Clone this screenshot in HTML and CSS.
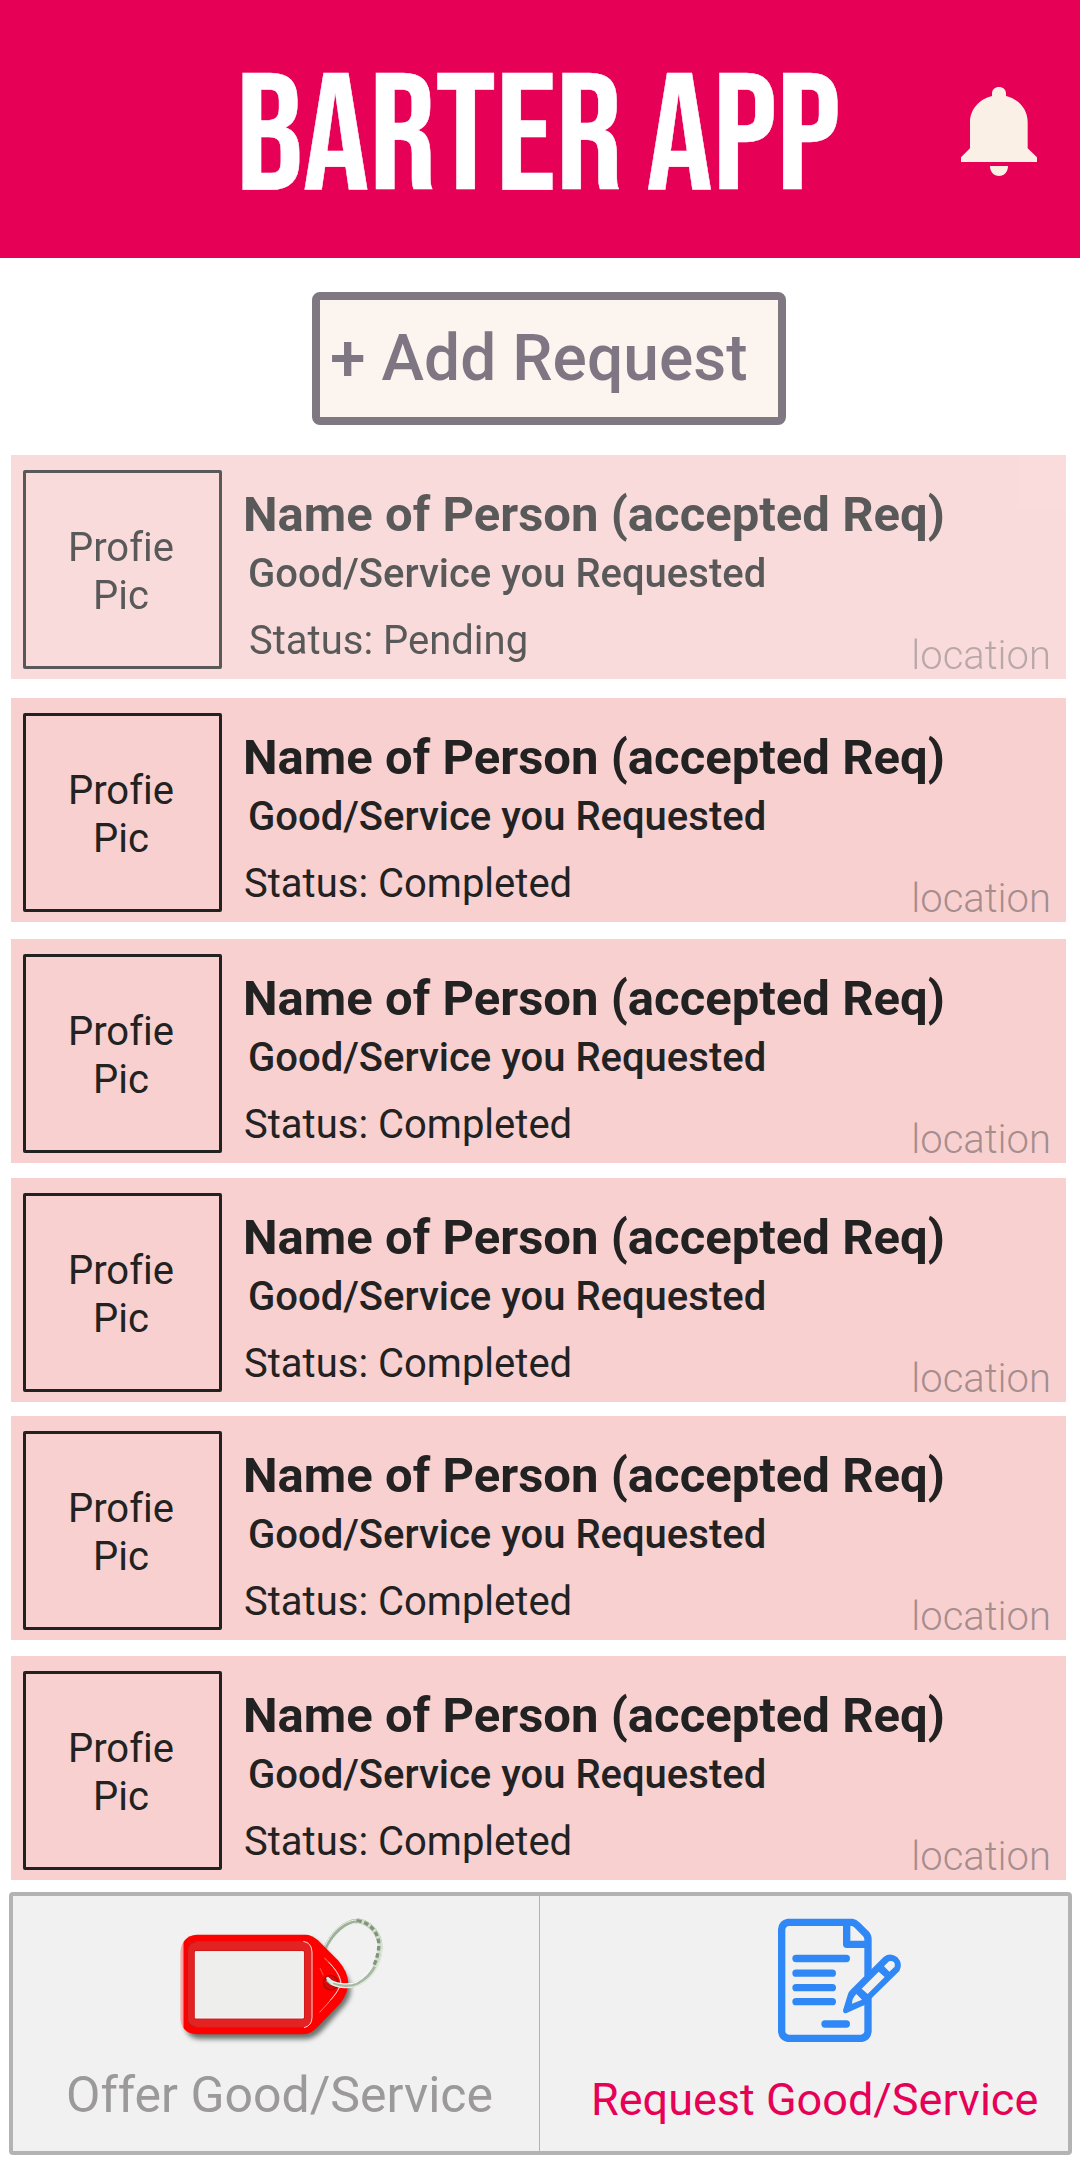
FILE: index.html
```html
<!DOCTYPE html>
<html lang="en">
<head>
<meta charset="utf-8">
<title>Barter App</title>
<link rel="stylesheet" href="styles.css">
</head>
<body>
<header class="header">
  <h1 class="title">BARTER APP</h1>
  <svg class="bell" viewBox="90 78 234 270" aria-hidden="true">
    <path d="M120 187C120 148 148 117 186 108V101C186 88 195 81 207 81S228 88 228 101V108C266 117 293 148 293 187V265L321 292V306H93V292L120 265Z"/>
    <path d="M180 318H234C234 336 222 348 207 348S180 336 180 318Z"/>
  </svg>
</header>

<button class="add" type="button">+ Add Request</button>

<main class="list">
  <article class="card card-pending">
    <div class="pic">Profie<br>Pic</div>
    <div class="info">
      <h2 class="name">Name of Person (accepted Req)</h2>
      <p class="service">Good/Service you Requested</p>
      <p class="status">Status: Pending</p>
    </div>
    <span class="location">location</span>
  </article>
  <article class="card gap-19">
    <div class="pic">Profie<br>Pic</div>
    <div class="info">
      <h2 class="name">Name of Person (accepted Req)</h2>
      <p class="service">Good/Service you Requested</p>
      <p class="status">Status: Completed</p>
    </div>
    <span class="location">location</span>
  </article>
  <article class="card gap-17">
    <div class="pic">Profie<br>Pic</div>
    <div class="info">
      <h2 class="name">Name of Person (accepted Req)</h2>
      <p class="service">Good/Service you Requested</p>
      <p class="status">Status: Completed</p>
    </div>
    <span class="location">location</span>
  </article>
  <article class="card gap-15">
    <div class="pic">Profie<br>Pic</div>
    <div class="info">
      <h2 class="name">Name of Person (accepted Req)</h2>
      <p class="service">Good/Service you Requested</p>
      <p class="status">Status: Completed</p>
    </div>
    <span class="location">location</span>
  </article>
  <article class="card gap-14">
    <div class="pic">Profie<br>Pic</div>
    <div class="info">
      <h2 class="name">Name of Person (accepted Req)</h2>
      <p class="service">Good/Service you Requested</p>
      <p class="status">Status: Completed</p>
    </div>
    <span class="location">location</span>
  </article>
  <article class="card gap-16">
    <div class="pic">Profie<br>Pic</div>
    <div class="info">
      <h2 class="name">Name of Person (accepted Req)</h2>
      <p class="service">Good/Service you Requested</p>
      <p class="status">Status: Completed</p>
    </div>
    <span class="location">location</span>
  </article>
</main>

<nav class="nav">
  <a class="tab tab-offer">
    <svg class="tag-icon" viewBox="54 81 624 396" aria-hidden="true">
      <defs>
        <filter id="soft" x="-10%" y="-10%" width="120%" height="130%"><feGaussianBlur stdDeviation="8"/></filter>
        <linearGradient id="edge" x1="0" x2="1" y1="0" y2="0">
          <stop offset="0" stop-color="#f6b5b5"/><stop offset=".016" stop-color="#f99"/><stop offset=".022" stop-color="#f00"/>
        </linearGradient>
      </defs>
      <path d="M494 180C515 130 553 96 591 93" fill="none" stroke="#9fb09a" stroke-width="13"/>
      <path d="M491 177C512 126 551 92 588 90" fill="none" stroke="#eef3ec" stroke-width="3"/>
      <path d="M499 182C519 136 556 103 588 99" fill="none" stroke="#f3f6f1" stroke-width="2.5"/>
      <path d="M112 146H440Q462 146 482 168L545 238Q596 296 552 348L484 424Q460 447 436 447H118Q76 444 74 396V190Q78 148 112 146Z" fill="#5d6560" opacity=".9" filter="url(#soft)"/>
      <path d="M110 134H436Q456 134 474 151L534 211Q592 277 540 341L470 414Q450 433 430 433H110Q64 430 61 385V185Q66 138 110 134Z" fill="url(#edge)"/>
      <path d="M105 154H430Q457 158 457 184V384Q457 409 430 412H108Q82 408 80 384V184Q82 158 105 154Z" fill="#e32222"/>
      <path d="M107 155Q83 160 82 184V384Q83 407 107 411" fill="none" stroke="#b80d0d" stroke-width="2"/>
      <path d="M430 154Q455 158 456 186V382Q456 407 432 413" fill="none" stroke="#fbd5d5" stroke-width="3"/>
      <path d="M104 183H432V386H104Z" fill="#eeeeec" stroke="#c60c12" stroke-width="3"/>
      <path d="M106 185H430V384H106Z" fill="none" stroke="#fafafa" stroke-width="3"/>
      <path d="M493 204C518 226 537 251 542 276C539 307 507 335 479 367" fill="none" stroke="#ff9b8b" stroke-width="2.5"/>
      <path d="M506 217C527 238 539 255 543 276C541 293 526 314 510 331" fill="none" stroke="#fff" stroke-width="2"/>
      <path d="M480 234L490 256" fill="none" stroke="#ff8060" stroke-width="2"/>
      <circle cx="512" cy="278" r="22" fill="#d90808" stroke="#a60000" stroke-width="3"/>
      <path d="M503 268C523 289 565 292 592 281C644 257 666 199 659 155C650 119 624 96 591 92" fill="none" stroke="#a8b8a3" stroke-width="14"/>
      <path d="M502 266C523 282 565 286 588 277C637 252 657 199 652 158" fill="none" stroke="#f5f8f3" stroke-width="4"/>
      <path d="M512 281C539 296 573 296 596 285C648 260 670 205 664 158" fill="none" stroke="#e5ede1" stroke-width="4"/>
      <path d="M591 92C624 96 650 119 659 155C661 178 655 205 643 230" fill="none" stroke="#d3decf" stroke-width="13"/>
      <path d="M591 92C624 96 650 119 656 155C658 178 652 205 640 230" fill="none" stroke="#809678" stroke-width="10" stroke-dasharray="14 8"/>
      <path d="M503 265L515 279" stroke="#d7eee7" stroke-width="9" stroke-linecap="round"/>
    </svg>
    <span class="offer-label">Offer Good/Service</span>
  </a>
  <a class="tab tab-request">
    <svg class="doc-icon" viewBox="48 51 384 384" fill="none" stroke="#3087f6" stroke-linecap="round" stroke-linejoin="round" aria-hidden="true">
      <g stroke-width="22">
        <path d="M324 290V395Q322 412 305 415H84Q67 412 65 395V88Q67 70 84 67H277Q284 68 291 75L317 101Q324 108 324 118V228" stroke-linecap="butt"/>
        <path d="M260 70V133H320"/>
        <path d="M108 175.500H259M108 219.500H217M108 263H217M108 305H217M195 372H259"/>
      </g>
      <path d="M249 331L264 282Q266 276 271 271L371 171Q391 156 412 172Q430 192 418 213L317 312Q312 317 305 319L260 339Q249 342 249 331Z" fill="#3087f6" stroke="none"/>
      <path d="M356 215L374 231L323 282L305 266ZM387 184L404 200Q407 193 402 187Q396 181 387 184ZM372 199L387 184L404 200L388 215ZM289 282L306 299L276 311Q276 295 289 282Z" fill="#f1f1f1" stroke="none"/>
    </svg>
    <span class="request-label">Request Good/Service</span>
  </a>
</nav>
</body>
</html>
```
FILE: styles.css
```css
* {
  box-sizing: border-box;
  margin: 0;
  padding: 0;
}

body {
  width: 1080px;
  height: 2160px;
  background: #fff;
  color: #222;
  font-family: Roboto, "Liberation Sans", sans-serif;
  font-variant-ligatures: none;
  overflow: hidden;
}

.header {
  display: flex;
  justify-content: space-between;
  height: 258px;
  padding: 0 42px 0 236px;
  background: #e60157;
}

.title {
  padding-top: 40px;
  color: #fff;
  font: 400 165.700px/200px "Bebas Neue", "Roboto Condensed", sans-serif;
  letter-spacing: -.1px;
  word-spacing: -2.500px;
  -webkit-text-stroke: .5px #fff;
  white-space: nowrap;
}

.bell {
  width: 78px;
  height: 90px;
  margin-top: 86px;
  fill: #fbf0e6;
}

.add {
  display: block;
  width: 474px;
  height: 133px;
  margin: 34px 0 30px 312px;
  padding: 0 0 0 10px;
  border: 8px solid #7f7883;
  border-radius: 8px;
  background: #fcf4ee;
  color: #7f7683;
  font: 500 64px/114px Roboto, "Liberation Sans", sans-serif;
  letter-spacing: .06px;
  text-align: left;
  white-space: nowrap;
}

.list {
  width: 1055px;
  margin-left: 11px;
}

.card {
  display: flex;
  align-items: flex-start;
  height: 224px;
  padding: 0 15px 0 12px;
  background: #f8d0d0;
}

.card-pending { opacity: .75; }
.gap-14 { margin-top: 14px; }
.gap-15 { margin-top: 15px; }
.gap-16 { margin-top: 16px; }
.gap-17 { margin-top: 17px; }
.gap-19 { margin-top: 19px; }

.pic {
  flex: none;
  width: 199px;
  height: 199px;
  margin-top: 15px;
  padding: 51px 3px 0 0;
  border: 3px solid #222;
  border-radius: 2px;
  font-size: 40px;
  line-height: 48px;
  text-align: center;
}

.info {
  flex: 1;
  min-width: 0;
  padding: 32px 0 0 21px;
  white-space: nowrap;
}

.name {
  font-size: 49px;
  font-weight: 700;
  line-height: 56px;
  letter-spacing: .02px;
}

.service {
  margin-top: 7px;
  padding-left: 5px;
  font-size: 40px;
  font-weight: 500;
  line-height: 48px;
}

.status {
  margin-top: 19px;
  padding-left: 1px;
  font-size: 40px;
  line-height: 48px;
}

.card-pending .status { padding-left: 6px; }

.location {
  align-self: flex-end;
  margin: 0 0 -1px -40px;
  color: rgba(34, 34, 34, .4);
  font-size: 40px;
  font-weight: 300;
  line-height: 48px;
}

.nav {
  display: flex;
  width: 1063px;
  height: 263px;
  margin: 12px 0 0 9px;
  border: 4px solid #b3b3b3;
  border-radius: 4px;
  background: #f1f1f1;
}

.tab {
  display: flex;
  flex-direction: column;
  padding-top: 21px;
  white-space: nowrap;
}

.tab-offer {
  width: 527px;
  padding-left: 53px;
  border-right: 1px solid #b3b3b3;
}

.tab-request {
  flex: 1;
  padding-left: 51px;
}

.tag-icon {
  width: 208px;
  height: 132px;
  margin-left: 112px;
}

.doc-icon {
  width: 128px;
  height: 128px;
  margin-left: 185px;
}

.offer-label {
  margin-top: 16px;
  color: #9b9999;
  font-size: 50px;
  line-height: 60px;
}

.request-label {
  margin-top: 25px;
  color: #e60157;
  font-size: 45px;
  line-height: 60px;
}
```
